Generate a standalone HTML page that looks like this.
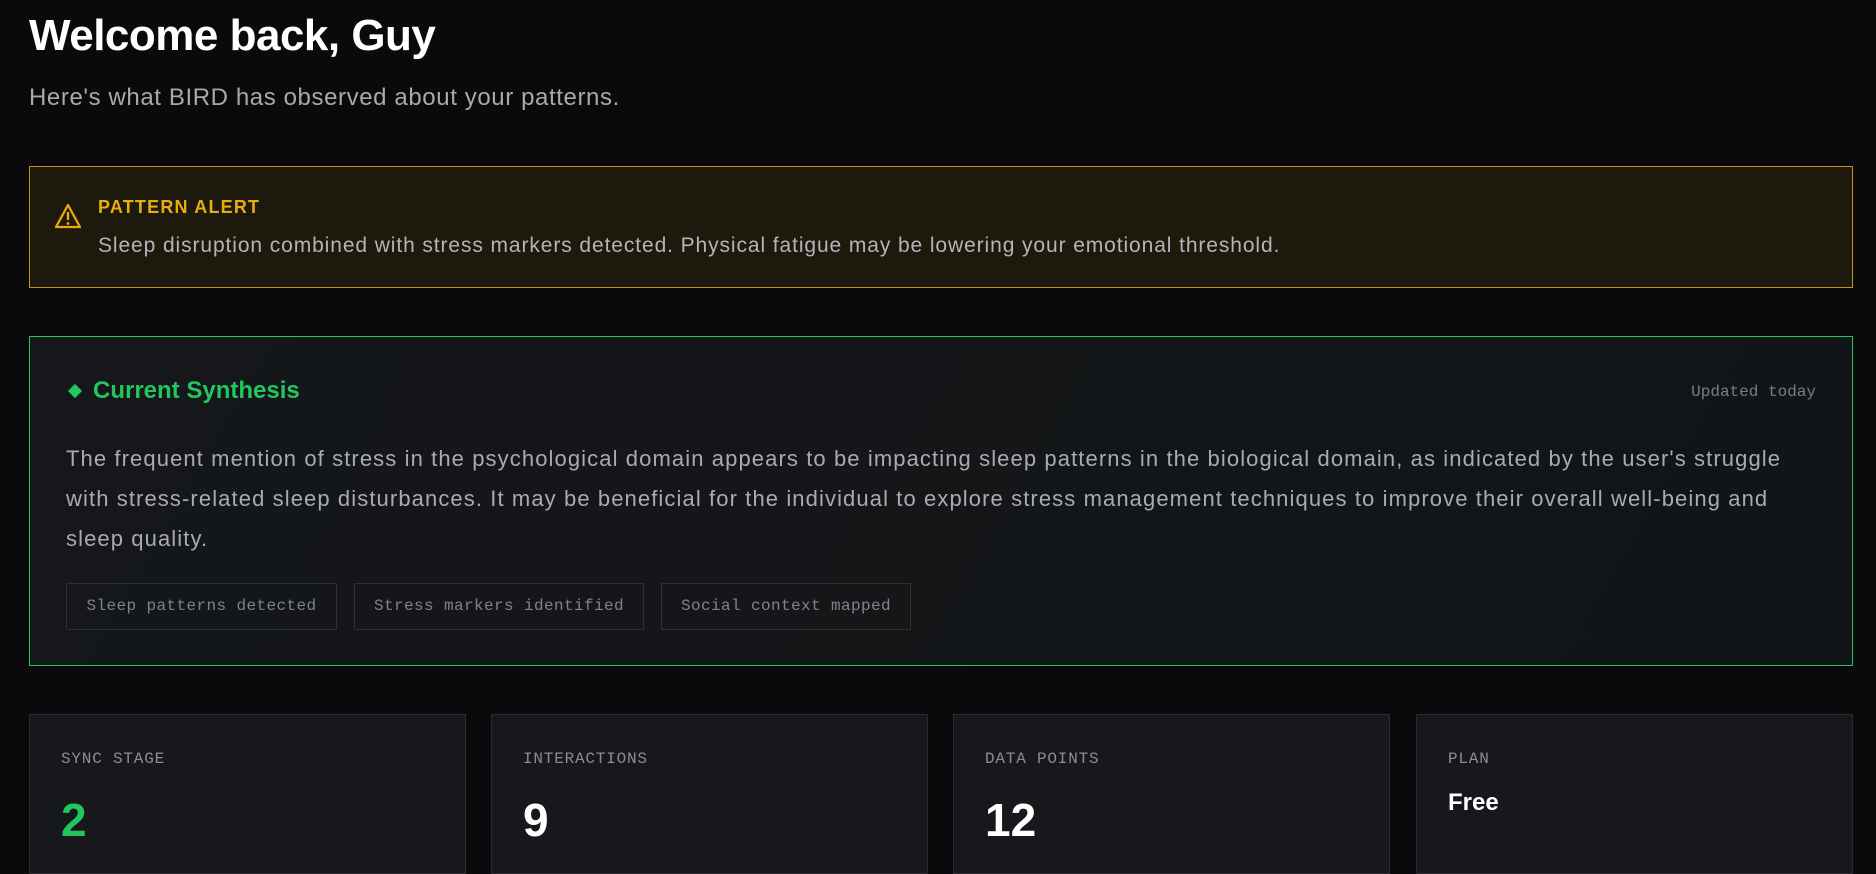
<!DOCTYPE html>
<html><head><meta charset="utf-8"><style>
*{margin:0;padding:0;box-sizing:border-box}
body{width:1876px;height:850px;overflow:hidden;background:#0a0a0c;font-family:"Liberation Sans",sans-serif;color:#fff;position:relative}
.abs{position:absolute}
h1{position:absolute;left:29px;top:11px;font-size:44px;font-weight:700;letter-spacing:-0.5px}
.sub{left:29px;top:84px;font-size:24px;color:#a8a8ad;letter-spacing:0.6px}
.alert{left:29px;top:166px;width:1824px;height:122px;border:1px solid #c8940e;background:#1d190d}
.synth{left:29px;top:336px;width:1824px;height:330px;border:1px solid #22c55e;background:linear-gradient(120deg,#15171a,#121517)}
.mono{font-family:"Liberation Mono",monospace}
.tag{position:absolute;top:246px;height:47px;border:1px solid #2c2f33;color:#80838a;font-size:16px;letter-spacing:0.4px;line-height:45px;text-align:center}
.card{top:714px;height:160px;width:437px;border:1px solid #2a2c30;background:#17181b}
.lab{position:absolute;left:31px;top:35px;font-size:16px;color:#8a8d92;letter-spacing:0.8px}
.val{position:absolute;left:31px;top:78px;font-size:46px;font-weight:700}
</style></head><body>
<h1>Welcome back, Guy</h1>
<div class="abs sub">Here's what BIRD has observed about your patterns.</div>
<div class="abs alert">
 <svg class="abs" style="left:24px;top:36px" width="28" height="26" viewBox="0 0 28 26"><path d="M14 2 L26 24 H2 Z" fill="none" stroke="#e8ad0c" stroke-width="2.2" stroke-linejoin="round"/><path d="M14 9 V17" stroke="#e8ad0c" stroke-width="2.4"/><circle cx="14" cy="20.5" r="1.4" fill="#e8ad0c"/></svg>
 <div class="abs" style="left:68px;top:30px;font-size:18px;font-weight:700;color:#e8ad0c;letter-spacing:1.2px">PATTERN ALERT</div>
 <div class="abs" style="left:68px;top:67px;font-size:21px;letter-spacing:0.9px;color:#b4b4b8">Sleep disruption combined with stress markers detected. Physical fatigue may be lowering your emotional threshold.</div>
</div>
<div class="abs synth">
 <div class="abs" style="left:40px;top:49px;width:10px;height:10px;background:#22c55e;transform:rotate(45deg)"></div>
 <div class="abs" style="left:63px;top:40px;font-size:24px;font-weight:700;color:#22c55e">Current Synthesis</div>
 <div class="abs mono" style="right:36px;top:46px;font-size:16px;color:#7a7d82">Updated today</div>
 <div class="abs" style="left:36px;top:102px;width:1745px;font-size:22px;letter-spacing:1.1px;line-height:40px;color:#a9abb0">The frequent mention of stress in the psychological domain appears to be impacting sleep patterns in the biological domain, as indicated by the user's struggle with stress-related sleep disturbances. It may be beneficial for the individual to explore stress management techniques to improve their overall well-being and sleep quality.</div>
 <div class="tag mono" style="left:36px;width:271px">Sleep patterns detected</div>
 <div class="tag mono" style="left:324px;width:290px">Stress markers identified</div>
 <div class="tag mono" style="left:631px;width:250px">Social context mapped</div>
</div>
<div class="abs card" style="left:29px"><div class="lab mono">SYNC STAGE</div><div class="val" style="color:#22c55e">2</div></div>
<div class="abs card" style="left:491px"><div class="lab mono">INTERACTIONS</div><div class="val">9</div></div>
<div class="abs card" style="left:953px"><div class="lab mono">DATA POINTS</div><div class="val">12</div></div>
<div class="abs card" style="left:1416px"><div class="lab mono">PLAN</div><div class="val" style="font-size:24px;top:74px">Free</div></div>
</body></html>
